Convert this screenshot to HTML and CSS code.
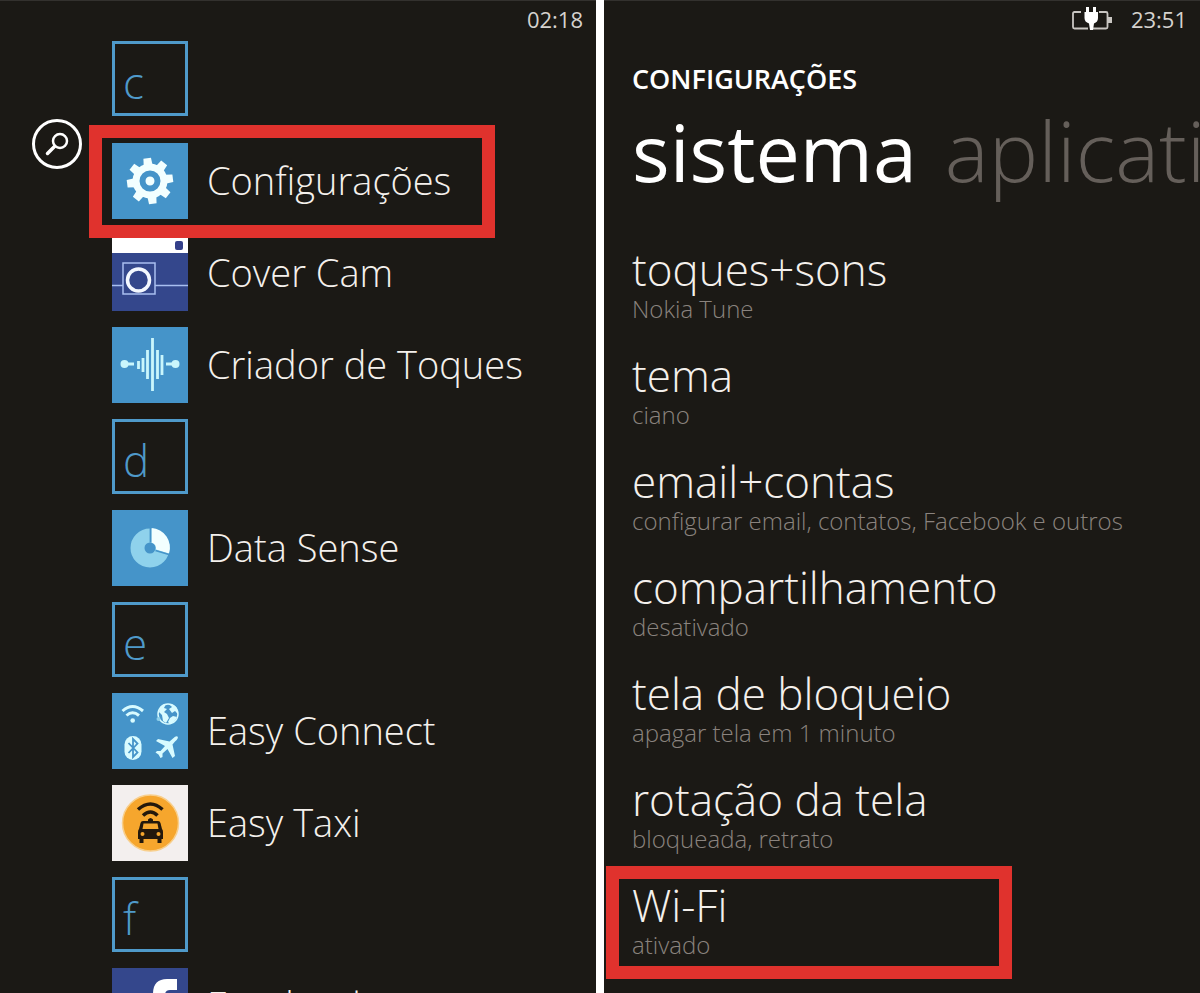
FILE: index.html
```
<!DOCTYPE html>
<html lang="pt-BR">

<head>
    <meta charset="UTF-8">
    <meta name="viewport" content="width=device-width, initial-scale=1">
    <title>Configurações</title>
    <link rel="stylesheet" href="styles.css">
</head>

<body>

    <!-- App list -->
    <section class="phone apps">
        <div class="status-bar"><time>02:18</time></div>

        <div class="apps-body">
            <button class="search" type="button" aria-label="Pesquisar">
                <svg viewBox="0 0 52 52" fill="none" stroke="#fff">
                    <circle cx="26" cy="26" r="23.5" stroke-width="3" />
                    <circle cx="29" cy="23" r="7" stroke-width="2.5" />
                    <path d="M23.5 28.5L16.5 35.5" stroke-width="3.5" stroke-linecap="round" />
                </svg>
            </button>

            <ul class="app-list">
                <li class="first"><a class="letter" href="#c">c</a></li>
                <li class="marked">
                    <a class="app" href="#configuracoes">
                        <svg class="tile" viewBox="0 0 76 76">
                            <rect width="76" height="76" fill="#4594c9" />
                            <g fill="#f2ffff" transform="translate(38 38) rotate(-7)">
                                <circle r="17.5" />
                                <path id="tooth" d="M-4.5 -15L-3.8 -23H3.8L4.5 -15V15L3.8 23H-3.8L-4.5 15Z" />
                                <use href="#tooth" transform="rotate(45)" />
                                <use href="#tooth" transform="rotate(90)" />
                                <use href="#tooth" transform="rotate(135)" />
                            </g>
                            <circle cx="38" cy="38" r="7.5" fill="#f2ffff" stroke="#4594c9" stroke-width="6" />
                            <circle cx="38" cy="38" r="4" fill="#f2ffff" />
                        </svg>
                        <span>Configurações</span>
                    </a>
                </li>
                <li>
                    <a class="app" href="#cover-cam">
                        <svg class="tile" viewBox="0 0 76 76">
                            <rect width="76" height="76" fill="#34478c" />
                            <rect width="76" height="18" fill="#fff" />
                            <rect x="63" y="6" width="8" height="9" rx="2" fill="#34408a" />
                            <g fill="none" stroke="#a9bff0" stroke-width="1.5">
                                <path d="M0 50.5H11M43 50.5H76" />
                                <rect x="11" y="28" width="32" height="31" />
                            </g>
                            <circle cx="26.5" cy="45" r="11" fill="none" stroke="#f4f8ff" stroke-width="3.5" />
                        </svg>
                        <span>Cover Cam</span>
                    </a>
                </li>
                <li>
                    <a class="app" href="#criador-de-toques">
                        <svg class="tile" viewBox="0 0 76 76">
                            <rect width="76" height="76" fill="#4594c9" />
                            <g stroke="#c9f6fc" stroke-width="2.8">
                                <path d="M12 37H22M54 37H64M26.5 34V42M31 31V45M35.5 23V52M40.5 11V64M45.5 23V52M50 28V48" />
                            </g>
                            <circle cx="12.5" cy="37" r="4" fill="#c9f6fc" />
                            <circle cx="63.5" cy="37" r="4" fill="#c9f6fc" />
                        </svg>
                        <span>Criador de Toques</span>
                    </a>
                </li>
                <li><a class="letter" href="#d">d</a></li>
                <li>
                    <a class="app" href="#data-sense">
                        <svg class="tile" viewBox="0 0 76 76">
                            <rect width="76" height="76" fill="#4594c9" />
                            <circle cx="38" cy="38" r="12.5" fill="none" stroke="#8fd2ec" stroke-width="14" />
                            <path d="M39.5 18A19.5 19.5 0 0 1 57 43.5L44 39.5A6 6 0 0 0 39.5 32.5Z" fill="#f2ffff" />
                            <path d="M38.5 18V32.5M43.5 40.5L57 44.5" stroke="#4594c9" stroke-width="1.8" />
                        </svg>
                        <span>Data Sense</span>
                    </a>
                </li>
                <li><a class="letter" href="#e">e</a></li>
                <li>
                    <a class="app" href="#easy-connect">
                        <svg class="tile" viewBox="0 0 76 76">
                            <rect width="76" height="76" fill="#4594c9" />
                            <!-- wi-fi -->
                            <g fill="none" stroke="#d8fbff" stroke-width="3">
                                <path d="M10.5 18Q20.5 9 31 18M14.5 22.5Q20.5 17 27 22.5" />
                            </g>
                            <circle cx="20.7" cy="27.5" r="2.3" fill="#d8fbff" />
                            <!-- globe -->
                            <circle cx="56" cy="21" r="10" fill="#4594c9" stroke="#d8fbff" stroke-width="1.5" />
                            <path d="M48 14Q51 11 54 11L52 15L55 16L52 19L55 21L57 25L54 30L51 28L50 22L47 19ZM57 11Q62 11 65 15L66 21L63 18L60 20L57 16L60 14ZM58 25L61 23L65 24Q63 29 58 31L56 29Z" fill="#d8fbff" />
                            <circle cx="46.5" cy="26" r="2" fill="#8fd2ec" />
                            <!-- bluetooth -->
                            <rect x="12.5" y="43" width="17" height="24" rx="8.5" fill="#d8fbff" />
                            <path d="M16.5 50L25.5 59.5L21 64V46L25.5 50.5L16.5 60" fill="none" stroke="#4594c9" stroke-width="1.8" />
                            <!-- plane -->
                            <path d="M65.5 43.5Q67 45 63 48.5L60.5 51.5L63 63L60.5 65L55.5 56L50.5 60.5L50.5 64L48.5 65L46.5 61.5L43.5 59.5L45 58L48.5 58L53 53L44 48L46 46L57.5 48.5L61 45.5Q64 42.5 65.5 43.5Z" fill="#d8fbff" />
                        </svg>
                        <span>Easy Connect</span>
                    </a>
                </li>
                <li>
                    <a class="app" href="#easy-taxi">
                        <svg class="tile" viewBox="0 0 76 76">
                            <rect width="76" height="76" fill="#f3efee" />
                            <circle cx="38.5" cy="38" r="28" fill="#f6a62d" stroke="#f8cf8c" stroke-width="1.5" />
                            <g fill="none" stroke="#23180c" stroke-width="3.5">
                                <path d="M26 24.5Q38.5 13.5 50.5 24.5M31 30.5Q38.5 23.5 45.5 30.5" />
                            </g>
                            <path d="M36 34.5Q38.5 31.5 41 34.5L41 36H46Q48 36 48.5 38L50 44Q51 45 51 47V54H49.5V58H45.5V54H31.5V58H27.5V54H26V47Q26 45 27 44L28.5 38Q29 36 31 36H36Z" fill="#23180c" />
                            <path d="M31.5 38.5H45.5L46.5 44H30.5Z" fill="#f6a62d" />
                            <circle cx="30.5" cy="49" r="2" fill="#f6a62d" />
                            <circle cx="46.5" cy="49" r="2" fill="#f6a62d" />
                        </svg>
                        <span>Easy Taxi</span>
                    </a>
                </li>
                <li><a class="letter" href="#f">f</a></li>
                <li>
                    <a class="app" href="#facebook">
                        <svg class="tile" viewBox="0 0 76 76">
                            <rect width="76" height="76" fill="#34478c" />
                            <path d="M65 11V22H58Q53 22 53 27V33H65L63 44H53V76H41V44H33V33H41V26Q41 11 55 11Z" fill="#fff" />
                        </svg>
                        <span>Facebook</span>
                    </a>
                </li>
            </ul>
        </div>
    </section>

    <!-- Settings -->
    <section class="phone settings">
        <div class="status-bar">
            <svg class="battery" viewBox="0 0 42 26" fill="none" stroke="#c9c6c2" stroke-width="1.8">
                <path d="M11 6H4.5Q3 6 3 7.5V21Q3 22.5 4.5 22.5H18M29 6H36Q37.5 6 37.5 7.5V21Q37.5 22.5 36 22.5H22" />
                <path d="M38 11H42V17H38Z" fill="#c9c6c2" stroke="none" />
                <path d="M16 1H19V6H23V1H26V6H28V12Q28 16 24 17.5L23 24H20L19 17.5Q14.5 16 14.5 12V6H16Z" fill="#fff" stroke="none" />
            </svg>
            <time>23:51</time>
        </div>

        <h1>CONFIGURAÇÕES</h1>
        <nav class="pivot">
            <a class="active" href="#sistema">sistema</a>
            <a href="#aplicativos">aplicativos</a>
        </nav>

        <ul class="setting-list">
            <li><a href="#toques"><strong>toques+sons</strong><small>Nokia Tune</small></a></li>
            <li><a href="#tema"><strong>tema</strong><small>ciano</small></a></li>
            <li><a href="#email"><strong>email+contas</strong><small>configurar email, contatos, Facebook e outros</small></a></li>
            <li><a href="#compartilhamento"><strong>compartilhamento</strong><small>desativado</small></a></li>
            <li><a href="#bloqueio"><strong>tela de bloqueio</strong><small>apagar tela em 1 minuto</small></a></li>
            <li><a href="#rotacao"><strong>rotação da tela</strong><small>bloqueada, retrato</small></a></li>
            <li class="marked"><a href="#wifi"><strong>Wi-Fi</strong><small>ativado</small></a></li>
        </ul>
    </section>

</body>

</html>
```
FILE: styles.css
```
*,
*::after {
    box-sizing: border-box;
}

body {
    margin: 0;
    height: 100vh;
    display: grid;
    grid-template-columns: 1fr 1fr;
    gap: 8px;
    overflow: hidden;
    background: #ffffff;
    color: #f4f0ec;
    font-family: "Open Sans", "Noto Sans", sans-serif;
    font-weight: 300;
}

a {
    color: inherit;
    text-decoration: none;
}

ul {
    list-style: none;
    margin: 0;
    padding: 0;
}

.phone {
    min-width: 0;
    overflow: hidden;
    background: #1b1915;
    border-top: 1px solid #33312e;
}

.status-bar {
    display: flex;
    justify-content: flex-end;
    align-items: center;
    gap: 19px;
    height: 36px;
    padding-right: 13px;
    font-size: 22px;
    font-weight: 400;
    color: #d5d2ce;
}

.battery {
    width: 42px;
    height: 26px;
}

.apps-body {
    display: flex;
    align-items: flex-start;
    padding: 4px 0 0 31px;
}

.search {
    width: 52px;
    height: 52px;
    margin: 77px 29px 0 0;
    padding: 0;
    border: none;
    background: none;
}

.search svg {
    display: block;
}

.app-list {
    display: flex;
    flex-direction: column;
    gap: 16px;
}

.app-list .first {
    margin-bottom: 11px;
}

.letter {
    display: flex;
    align-items: flex-end;
    width: 76px;
    height: 75px;
    padding: 0 0 6px 8px;
    border: 3px solid #4f9aca;
    color: #4f9aca;
    font-size: 44px;
    line-height: 50px;
}

.app {
    display: flex;
    align-items: center;
    gap: 19px;
    font-size: 38px;
    line-height: 48px;
    white-space: nowrap;
}

.app span {
    padding-bottom: 2px;
}

.tile {
    display: block;
    flex: none;
    width: 76px;
    height: 76px;
}

/* red frame around the highlighted entry */
.marked {
    position: relative;
    z-index: 1;
}

.marked::after {
    content: "";
    position: absolute;
    width: 406px;
    height: 113px;
    border: 13px solid #e0322d;
    pointer-events: none;
}

.app-list .marked::after {
    top: -18px;
    left: -23px;
}

.settings {
    padding-left: 28px;
}

h1 {
    margin: 23px 0 0;
    font-size: 27px;
    line-height: 38px;
    font-weight: 600;
    color: #ffffff;
}

.pivot {
    display: flex;
    align-items: baseline;
    gap: 28px;
    height: 109px;
    font-size: 83px;
    line-height: 104px;
    white-space: nowrap;
    color: #655f5a;
}

.pivot .active {
    color: #ffffff;
    font-size: 79px;
    font-weight: 400;
}

.setting-list {
    margin-top: 35px;
}

.setting-list li {
    height: 106px;
}

.setting-list strong,
.setting-list small {
    display: block;
    white-space: nowrap;
}

.setting-list strong {
    font-size: 44px;
    line-height: 54px;
    font-weight: 300;
}

.setting-list small {
    font-size: 24px;
    line-height: 26px;
    color: #8a837e;
}

.setting-list .marked::after {
    top: -12px;
    left: -26px;
}
```
